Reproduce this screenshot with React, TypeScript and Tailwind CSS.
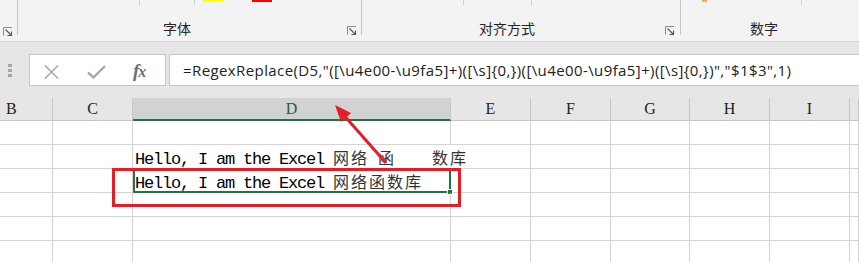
import React from 'react';

const cols = [
  { key: 'B', w: 'w-[53px]' },
  { key: 'C', w: 'w-[80px]' },
  { key: 'D', w: 'w-[318px]' },
  { key: 'E', w: 'w-[80px]' },
  { key: 'F', w: 'w-[80px]' },
  { key: 'G', w: 'w-[79px]' },
  { key: 'H', w: 'w-[80px]' },
  { key: 'I', w: 'w-[80px]' },
  { key: 'J', w: 'flex-1' },
];

const formula = '=RegexReplace(D5,"([\\u4e00-\\u9fa5]+)([\\s]{0,})([\\u4e00-\\u9fa5]+)([\\s]{0,})","$1$3",1)';

function Launcher() {
  return (
    <svg width="10" height="9" viewBox="0 0 10 9" className="block">
      <path d="M0.5 8.5V0.5H9" fill="none" stroke="#8a8a8a" strokeWidth="1" />
      <path d="M2.5 2.5L8 8" fill="none" stroke="#555" strokeWidth="1.1" />
      <path d="M8.5 4.5V8.5H4.5" fill="none" stroke="#555" strokeWidth="1.1" />
    </svg>
  );
}

function Cjk({ children }: { children: React.ReactNode }) {
  return (
    <span className="font-['Noto_Sans_CJK_SC',sans-serif] text-[16px] tracking-[2px] text-[#333]">{children}</span>
  );
}

function CellText({ parts }: { parts: [string, boolean][] }) {
  return (
    <div className="pl-[2px] whitespace-pre font-['Liberation_Mono',monospace] text-[17px] tracking-[-1.2px] leading-[24px] text-black">
      {parts.map(([t, cjk], i) => (cjk ? <Cjk key={i}>{t}</Cjk> : <span key={i}>{t}</span>))}
    </div>
  );
}

function Row({ children, dCell }: { children?: React.ReactNode; dCell?: 'overflow' | 'selected' }) {
  return (
    <div className="flex h-[24px]">
      {cols.map((c) => {
        const isD = c.key === 'D';
        const noRight = isD && dCell === 'overflow';
        return (
          <div
            key={c.key}
            className={`${c.w} shrink-0 h-full border-b border-[#d4d4d4] ${noRight ? '' : 'border-r'} relative ${isD ? 'z-10' : ''}`}
          >
            {isD && dCell === 'selected' && (
              <div className="absolute left-0 top-[-1px] right-[-1px] bottom-[-1px] border-2 border-[#217346]">
                <div className="absolute right-[-4px] bottom-[-4px] w-[6px] h-[6px] bg-[#217346] border border-white" />
              </div>
            )}
            {isD && children}
          </div>
        );
      })}
    </div>
  );
}

export default function App() {
  return (
    <div className="relative w-[859px] h-[262px] overflow-hidden bg-white font-['Noto_Sans',sans-serif]">
      {/* ribbon */}
      <div className="flex h-[42px] bg-[#f3f3f3] border-b border-[#d4d4d4]">
        <div className="w-[17px] h-full flex flex-col justify-end pb-[5px] pl-[3px]">
          <Launcher />
        </div>
        <div className="w-px h-[35px] bg-[#c6c6c6]" />
        <div className="w-[343px] h-full flex flex-col justify-between">
          <div className="flex h-[5px] items-start">
            <div className="w-[121px]" />
            <div className="w-px h-[5px] bg-[#d0d0d0]" />
            <div className="w-[54px]" />
            <div className="w-px h-[5px] bg-[#d0d0d0]" />
            <div className="w-[8px]" />
            <div className="w-[20px] h-[2px] bg-[#ffff00]" />
            <div className="w-[29px]" />
            <div className="w-[20px] h-[2px] bg-[#ff0000]" />
          </div>
          <div className="flex items-end h-[18px] mb-[4px]">
            <div className="w-[145px]" />
            <div className="font-['Noto_Sans_CJK_SC',sans-serif] text-[14px] leading-[18px] text-[#262626]">字体</div>
            <div className="flex-1" />
            <div className="mr-[4px] mb-[2px]"><Launcher /></div>
          </div>
        </div>
        <div className="w-px h-[35px] bg-[#c6c6c6]" />
        <div className="w-[318px] h-full flex flex-col justify-between">
          <div className="flex h-[5px] items-start">
            <div className="w-[101px]" />
            <div className="w-px h-[5px] bg-[#d0d0d0]" />
            <div className="w-[67px]" />
            <div className="w-px h-[5px] bg-[#d0d0d0]" />
          </div>
          <div className="flex items-end h-[18px] mb-[4px]">
            <div className="w-[117px]" />
            <div className="font-['Noto_Sans_CJK_SC',sans-serif] text-[14px] leading-[18px] text-[#262626]">对齐方式</div>
            <div className="flex-1" />
            <div className="mr-[5px] mb-[2px]"><Launcher /></div>
          </div>
        </div>
        <div className="w-px h-[35px] bg-[#c6c6c6]" />
        <div className="flex-1 h-full flex flex-col justify-between">
          <div className="flex h-[5px] items-start">
            <div className="w-[21px]" />
            <div className="w-[5px] h-[2px] bg-[#f0b050]" />
            <div className="w-[94px]" />
            <div className="w-px h-[5px] bg-[#d0d0d0]" />
          </div>
          <div className="flex items-end h-[18px] mb-[4px]">
            <div className="w-[69px]" />
            <div className="font-['Noto_Sans_CJK_SC',sans-serif] text-[14px] leading-[18px] text-[#262626]">数字</div>
          </div>
        </div>
      </div>

      {/* formula bar */}
      <div className="flex items-center h-[56px] bg-[#e6e6e6] pl-[8px]">
        <div className="flex flex-col gap-[2px] w-[4px] mr-[17px]">
          <div className="h-[3px] bg-[#a6a6a6]" />
          <div className="h-[3px] bg-[#a6a6a6]" />
          <div className="h-[3px] bg-[#a6a6a6]" />
        </div>
        <div className="flex items-center w-[137px] h-[32px] bg-white border border-[#c6c6c6]">
          <svg width="18" height="14" viewBox="0 0 18 14" className="ml-[13px] mt-[3px]">
            <path d="M2 0.5L15 13.5M15 0.5L2 13.5" stroke="#a9a9a9" strokeWidth="1.6" fill="none" />
          </svg>
          <svg width="19" height="14" viewBox="0 0 19 14" className="ml-[26px] mt-[4px]">
            <path d="M1 7.5L6.5 12.5L18 1" stroke="#a9a9a9" strokeWidth="2.4" fill="none" />
          </svg>
          <div className="ml-[27px] font-['Liberation_Serif',serif] italic font-bold text-[19px] leading-none text-[#6f6f6f] tracking-[-1px]">
            f<span className="text-[16px]">x</span>
          </div>
        </div>
        <div className="ml-[3px] flex-1 h-[32px] bg-white border border-r-0 border-[#c6c6c6] pl-[13px] flex items-center">
          <span className="whitespace-pre font-['Open_Sans',sans-serif] text-[15px] tracking-[0.4px] text-[#222]">{formula}</span>
        </div>
      </div>

      {/* column headers */}
      <div className="flex h-[23px] bg-[#e6e6e6]">
        {cols.map((c) => {
          const isD = c.key === 'D';
          return (
            <div
              key={c.key}
              className={`${c.w} shrink-0 h-full flex items-center justify-center border-r border-[#c6c6c6] font-['Liberation_Serif',serif] text-[16px] ${
                isD ? 'bg-[#d2d2d2] border-b-2 border-b-[#217346] text-[#1e5e3a]' : 'border-b border-b-[#c6c6c6] text-[#222]'
              } ${c.key === 'B' ? 'justify-start pl-[6px]' : ''}`}
            >
              {c.key === 'J' ? '' : c.key}
            </div>
          );
        })}
      </div>

      {/* rows */}
      <Row />
      <Row dCell="overflow">
        <CellText parts={[['Hello, I am the Excel ', false], ['网络', true], [' ', false], ['函', true], ['    ', false], ['数库', true]]} />
      </Row>
      <Row dCell="selected">
        <div className="relative">
          <CellText parts={[['Hello, I am the Excel ', false], ['网络函数库', true]]} />
        </div>
      </Row>
      <Row />
      <Row />
      <Row />

      {/* annotation overlay */}
      <svg className="absolute inset-0 pointer-events-none z-20" width="859" height="262" viewBox="0 0 859 262">
        <rect x="113.5" y="169.5" width="346" height="36" fill="none" stroke="#e41e26" strokeWidth="3" />
        <line x1="386" y1="163" x2="345" y2="116.5" stroke="#e41e26" strokeWidth="3" />
        <polygon points="335,105 351,113 341,122" fill="#e41e26" />
      </svg>
    </div>
  );
}
